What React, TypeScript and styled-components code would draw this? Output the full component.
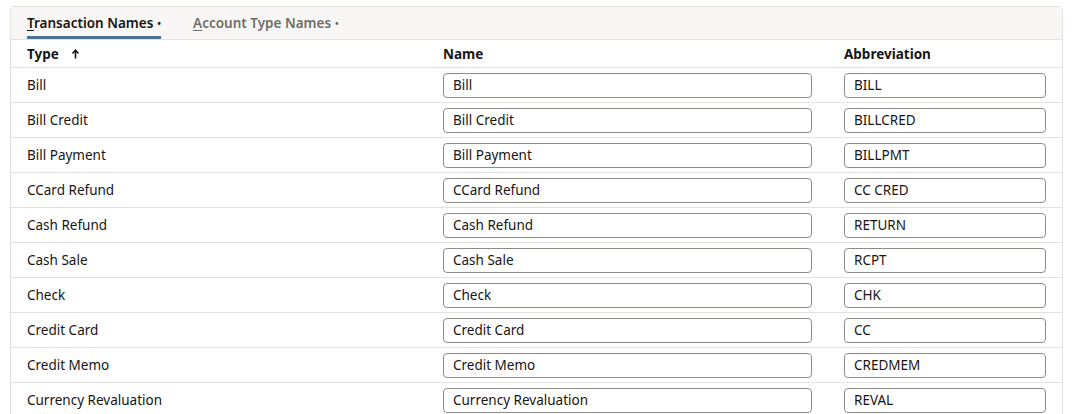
import styled, { createGlobalStyle } from "styled-components";

const rows: [string, string, string][] = [
  ["Bill", "Bill", "BILL"],
  ["Bill Credit", "Bill Credit", "BILLCRED"],
  ["Bill Payment", "Bill Payment", "BILLPMT"],
  ["CCard Refund", "CCard Refund", "CC CRED"],
  ["Cash Refund", "Cash Refund", "RETURN"],
  ["Cash Sale", "Cash Sale", "RCPT"],
  ["Check", "Check", "CHK"],
  ["Credit Card", "Credit Card", "CC"],
  ["Credit Memo", "Credit Memo", "CREDMEM"],
  ["Currency Revaluation", "Currency Revaluation", "REVAL"],
];

const GlobalStyle = createGlobalStyle`
  html, body {
    margin: 0;
    background: #ffffff;
    overflow: hidden;
  }
  body {
    font-family: "Noto Sans", "Open Sans", Arial, sans-serif;
    color: #161513;
  }
`;

const Page = styled.div`
  padding: 6px 15px 0 10px;
`;

const Panel = styled.div`
  border: 1px solid #e4e2df;
  border-radius: 4px 4px 0 0;
  background: #fff;
`;

const TabBar = styled.div`
  display: flex;
  gap: 32px;
  height: 33px;
  box-sizing: border-box;
  padding: 0 16px;
  background: #f8f7f6;
  border-bottom: 1px solid #e4e2df;
  border-radius: 4px 4px 0 0;
`;

const Tab = styled.div<{ $active?: boolean }>`
  display: flex;
  align-items: center;
  gap: 4px;
  font-size: 13.5px;
  font-weight: 600;
  color: ${({ $active }) => ($active ? "#161513" : "#6f6c69")};
  border-bottom: 3px solid
    ${({ $active }) => ($active ? "#4b7594" : "transparent")};
  padding-top: 3px;
  box-sizing: border-box;

  u {
    text-underline-offset: 2px;
    text-decoration-thickness: 1px;
  }
`;

const Dot = styled.span`
  font-size: 10px;
  line-height: 1;
`;

const Row = styled.div<{ $header?: boolean }>`
  display: grid;
  grid-template-columns: 416px 401px 1fr;
  height: ${({ $header }) => ($header ? "28px" : "35px")};
  box-sizing: border-box;
  border-bottom: 1px solid #e4e2df;
  align-items: center;
  font-size: 13.5px;
  font-weight: ${({ $header }) => ($header ? 700 : 400)};
`;

const Cell = styled.div`
  display: flex;
  align-items: center;
  gap: 12px;
  padding: 0 16px;
  min-width: 0;
`;

const Field = styled.input`
  width: 100%;
  height: 25px;
  box-sizing: border-box;
  border: 1px solid #8d8b88;
  border-radius: 4px;
  padding: 0 9px;
  font: inherit;
  font-size: 13.5px;
  color: #161513;
  background: #fff;
  outline: none;
`;

const SortArrow = () => (
  <svg width="9" height="10" viewBox="0 0 9 10" aria-hidden>
    <path d="M4.5 1.5V9.5" stroke="#161513" strokeWidth="1.6" />
    <path d="M1.5 4.5L4.5 1.2L7.5 4.5" fill="none" stroke="#161513" strokeWidth="1.6" />
  </svg>
);

export default function App() {
  return (
    <Page>
      <GlobalStyle />
      <Panel>
        <TabBar>
          <Tab $active>
            <span>
              <u>T</u>ransaction Names
            </span>
            <Dot>•</Dot>
          </Tab>
          <Tab>
            <span>
              <u>A</u>ccount Type Names
            </span>
            <Dot>•</Dot>
          </Tab>
        </TabBar>
        <Row $header>
          <Cell>
            Type <SortArrow />
          </Cell>
          <Cell>Name</Cell>
          <Cell>Abbreviation</Cell>
        </Row>
        {rows.map(([type, name, abbr]) => (
          <Row key={type}>
            <Cell>{type}</Cell>
            <Cell>
              <Field defaultValue={name} />
            </Cell>
            <Cell>
              <Field defaultValue={abbr} />
            </Cell>
          </Row>
        ))}
      </Panel>
    </Page>
  );
}
